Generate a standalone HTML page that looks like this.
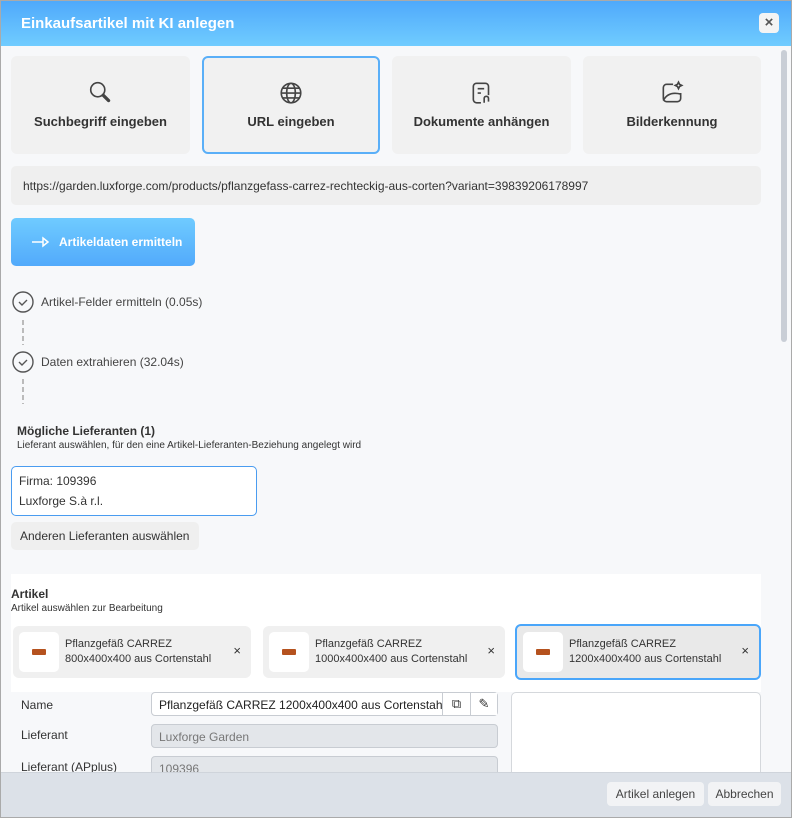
<!DOCTYPE html><html><head><meta charset="utf-8"><style>
*{box-sizing:border-box;margin:0;padding:0}
body{width:792px;height:818px;overflow:hidden;font-family:"Liberation Sans",sans-serif;background:#f7f8fa;position:relative;color:#333}
.a{position:absolute}
.hdr{left:0;top:0;width:792px;height:46px;background:linear-gradient(#4fa9fb,#70ccff);border:1px solid #bbb;border-bottom:none}
.card{background:#f1f1f1;border-radius:6px;top:56px;height:98px;text-align:center;font-weight:bold;font-size:13px;color:#333}
.card svg{position:absolute;left:50%;margin-left:-13px;top:24px}
.card span{position:absolute;left:0;right:0;top:58px}
.chip{top:626px;height:52px;background:#f0f0f0;border-radius:6px;font-size:11px;color:#333}
.chip .im{position:absolute;left:6px;top:6px;width:40px;height:40px;background:#fff;border-radius:5px}
.chip .im i{position:absolute;left:13px;top:17px;width:14px;height:6px;background:#b5521e;border-radius:1px}
.chip .t{position:absolute;left:52px;top:11px;line-height:15px}
.chip .x{position:absolute;right:10px;top:17px;font-size:13px}
.lbl{left:21px;font-size:12px;color:#333}
.inp{left:151px;width:347px;height:24px;border:1px solid #c8ccd2;border-radius:4px;font-size:12px;padding:5px 7px}
</style></head><body>
<div class="a" style="left:0;top:0;width:792px;height:818px;border:1px solid #aaa;z-index:9;pointer-events:none"></div>
<div class="a hdr"></div>
<div class="a" style="left:21px;top:15px;color:#fff;font-weight:bold;font-size:15px">Einkaufsartikel mit KI anlegen</div>
<div class="a" style="left:759px;top:13px;width:20px;height:20px;background:#f4f4f4;border-radius:4px;text-align:center;font-size:15px;line-height:20px;font-weight:bold;color:#555">×</div>
<div class="a" style="left:781px;top:50px;width:6px;height:292px;background:#c9ced6;border-radius:3px"></div>

<div class="a card" style="left:11px;width:179px"><svg width="26" height="26" viewBox="0 0 24 24" fill="none" stroke="#444" stroke-width="1.5"><circle cx="9" cy="9" r="6.5"/><path d="M14 14l5 5" stroke-width="3" stroke-linecap="round"/></svg><span>Suchbegriff eingeben</span></div>
<div class="a card" style="left:202px;width:178px;border:2px solid #5aaff8"><svg width="26" height="26" viewBox="0 0 24 24" fill="none" stroke="#444" stroke-width="1.5" style="top:22px"><circle cx="12" cy="12" r="9"/><ellipse cx="12" cy="12" rx="4" ry="9"/><path d="M3 12h18M4.5 7.5h15M4.5 16.5h15"/></svg><span style="top:56px">URL eingeben</span></div>
<div class="a card" style="left:392px;width:179px"><svg width="26" height="26" viewBox="0 0 24 24" fill="none" stroke="#444" stroke-width="1.5"><path d="M11 21H7a3 3 0 0 1-3-3V6a3 3 0 0 1 3-3h8a3 3 0 0 1 3 3v8"/><path d="M8 8h6M8 12h3M14 21v-4a2 2 0 0 1 4 0v3"/></svg><span>Dokumente anhängen</span></div>
<div class="a card" style="left:583px;width:178px"><svg width="26" height="26" viewBox="0 0 24 24" fill="none" stroke="#444" stroke-width="1.5"><path d="M13 4H7a3 3 0 0 0-3 3v10a3 3 0 0 0 3 3h10a3 3 0 0 0 3-3v-5"/><path d="M4 19c3-6 8-8 16-6"/><path d="M18 2l1 2 2 1-2 1-1 2-1-2-2-1 2-1z"/></svg><span>Bilderkennung</span></div>

<div class="a" style="left:11px;top:166px;width:750px;height:39px;background:#efefef;border-radius:5px;font-size:12px;padding:13px 12px;color:#333">https://garden.luxforge.com/products/pflanzgefass-carrez-rechteckig-aus-corten?variant=39839206178997</div>
<div class="a" style="left:11px;top:218px;width:184px;height:48px;background:linear-gradient(#6fcbff,#52aafb);border-radius:5px;color:#fff;font-weight:bold;font-size:12px;padding:17px 0 0 48px">Artikeldaten ermitteln</div>
<svg class="a" style="left:32px;top:236px" width="20" height="12" viewBox="0 0 20 12" fill="none" stroke="#fff" stroke-width="1.5"><path d="M0 6h11M11 2l5 4-5 4z"/></svg>

<svg class="a" style="left:12px;top:291px" width="22" height="90" viewBox="0 0 22 90" fill="none" stroke="#555" stroke-width="1.4"><circle cx="11" cy="11" r="10"/><path d="M7 11l3 3 5-5"/><circle cx="11" cy="71" r="10"/><path d="M7 71l3 3 5-5"/><path d="M11 29v25" stroke="#bbb" stroke-width="2" stroke-dasharray="5 3"/></svg>
<svg class="a" style="left:21px;top:379px" width="4" height="26"><path d="M2 0v25" stroke="#bbb" stroke-width="2" stroke-dasharray="5 3"/></svg>
<div class="a" style="left:41px;top:295px;font-size:12px;color:#444">Artikel-Felder ermitteln (0.05s)</div>
<div class="a" style="left:41px;top:355px;font-size:12px;color:#444">Daten extrahieren (32.04s)</div>

<div class="a" style="left:17px;top:424px;font-size:12px;font-weight:bold;color:#333">Mögliche Lieferanten (1)</div>
<div class="a" style="left:17px;top:440px;font-size:10px;color:#333">Lieferant auswählen, für den eine Artikel-Lieferanten-Beziehung angelegt wird</div>
<div class="a" style="left:11px;top:466px;width:246px;height:50px;border:1px solid #4a9cf0;border-radius:5px;background:#fff;font-size:12px;line-height:20px;padding:4px 7px">Firma: 109396<br>Luxforge S.à r.l.</div>
<div class="a" style="left:11px;top:522px;width:188px;height:28px;background:#efefef;border-radius:5px;font-size:12px;padding:7px 9px">Anderen Lieferanten auswählen</div>

<div class="a" style="left:11px;top:574px;width:750px;height:118px;background:#fff"></div>
<div class="a" style="left:11px;top:587px;font-size:12px;font-weight:bold">Artikel</div>
<div class="a" style="left:11px;top:603px;font-size:10px">Artikel auswählen zur Bearbeitung</div>
<div class="a chip" style="left:13px;width:238px"><div class="im"><i></i></div><div class="t">Pflanzgefäß CARREZ<br>800x400x400 aus Cortenstahl</div><div class="x">×</div></div>
<div class="a chip" style="left:263px;width:242px"><div class="im"><i></i></div><div class="t">Pflanzgefäß CARREZ<br>1000x400x400 aus Cortenstahl</div><div class="x">×</div></div>
<div class="a chip" style="left:515px;width:246px;height:56px;top:624px;border:2px solid #4aa6fa;background:#e9e9e9"><div class="im"><i></i></div><div class="t">Pflanzgefäß CARREZ<br>1200x400x400 aus Cortenstahl</div><div class="x">×</div></div>

<div class="a lbl" style="top:698px">Name</div>
<div class="a lbl" style="top:728px">Lieferant</div>
<div class="a lbl" style="top:760px">Lieferant (APplus)</div>
<div class="a inp" style="top:692px;background:#fff;color:#222;overflow:hidden;white-space:nowrap;padding-right:65px">Pflanzgefäß CARREZ 1200x400x400 aus Cortenstahl</div>
<div class="a" style="left:442px;top:693px;width:28px;height:22px;border-left:1px solid #c8ccd2;background:#fff;text-align:center;font-size:13px;line-height:22px">⧉</div>
<div class="a" style="left:470px;top:693px;width:27px;height:22px;border-left:1px solid #c8ccd2;background:#fff;text-align:center;font-size:13px;line-height:22px">✎</div>
<div class="a inp" style="top:724px;background:#e3e6ea;color:#777">Luxforge Garden</div>
<div class="a inp" style="top:756px;background:#e3e6ea;color:#777;height:30px">109396</div>
<div class="a" style="left:511px;top:692px;width:250px;height:90px;border:1px solid #d5d8dc;border-radius:5px;background:#fff"></div>

<div class="a" style="left:0;top:772px;width:792px;height:46px;background:#dce1e8;border-top:1px solid #cfd4db"></div>
<div class="a" style="left:607px;top:782px;width:97px;height:24px;background:#f2f3f5;border-radius:4px;font-size:12px;text-align:center;line-height:24px;color:#444">Artikel anlegen</div>
<div class="a" style="left:708px;top:782px;width:73px;height:24px;background:#f2f3f5;border-radius:4px;font-size:12px;text-align:center;line-height:24px;color:#444">Abbrechen</div>
</body></html>
